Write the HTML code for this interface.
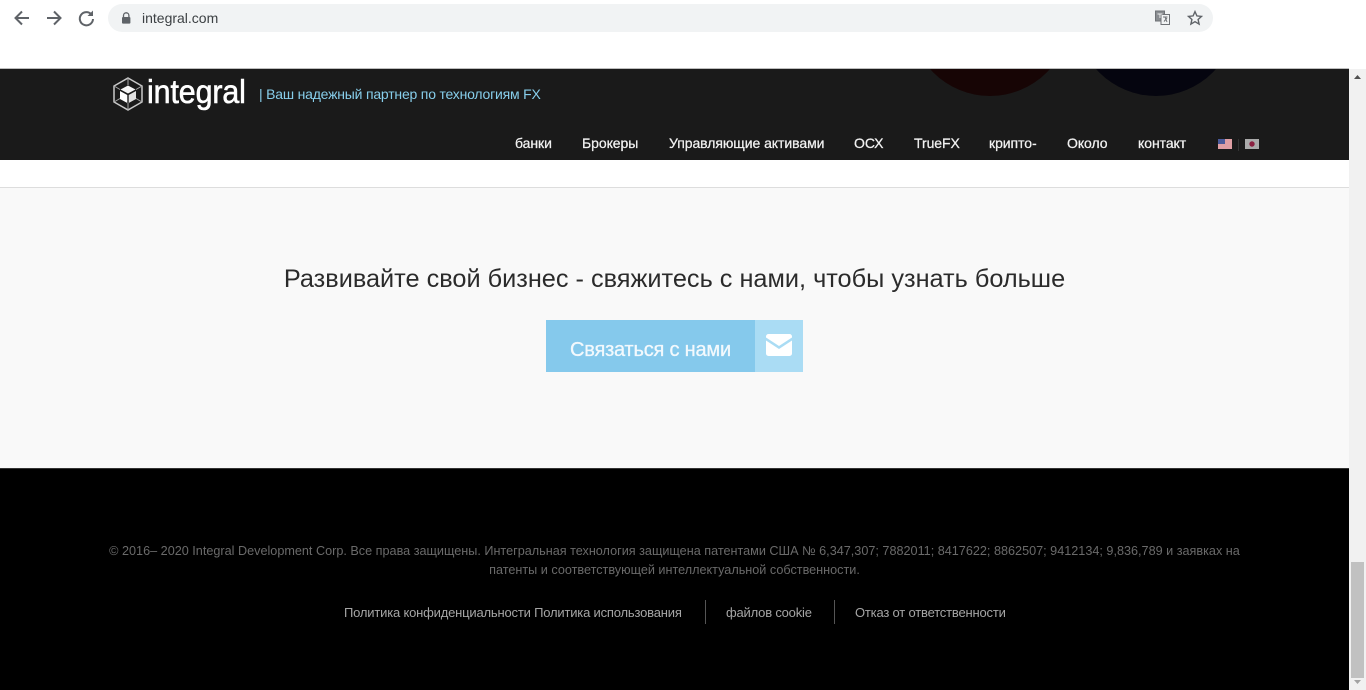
<!DOCTYPE html>
<html lang="ru"><head><meta charset="utf-8"><title>integral.com</title>
<style>
html,body{margin:0;padding:0;width:1366px;height:690px;overflow:hidden;background:#fff;font-family:"Liberation Sans",sans-serif}
.a{position:absolute;white-space:nowrap}
.n{top:135px;font-size:14px;line-height:16px;color:#f2f2f2;letter-spacing:-.06px;-webkit-text-stroke:.25px #f2f2f2}
.f{font-size:12.65px;line-height:15px;color:#6a6a6a;text-align:center;left:0;width:1349px}
.l{top:605px;font-size:13px;line-height:16px;color:#a5a5a5;letter-spacing:-.19px}
</style></head><body>
<!-- browser bar -->
<svg class="a" style="left:0;top:0" width="110" height="36" fill="none" stroke="#5f6368" stroke-width="2">
<path d="M29 18H16M22 11.5L15.5 18L22 24.5"/>
<path d="M47 18H60M54 11.5L60.5 18L54 24.5"/>
<path d="M91.5 14.5A6.6 6.6 0 1 0 93 19"/><path d="M93 10.5V16H87.5z" fill="#5f6368" stroke="none"/>
</svg>
<div class="a" style="left:108px;top:4px;width:1105px;height:28px;border-radius:14px;background:#f1f3f4"></div>
<svg class="a" style="left:120px;top:11px" width="12" height="14"><path d="M3.5 6V4.5a2.7 2.7 0 0 1 5.4 0V6" fill="none" stroke="#5f6368" stroke-width="1.3"/><rect x="2" y="6" width="8.4" height="6.6" rx="1" fill="#5f6368"/></svg>
<div class="a" style="left:142px;top:10px;font-size:14px;line-height:17px;color:#3c4043">integral.com</div>
<svg class="a" style="left:1154px;top:9px" width="18" height="18"><rect x="1.5" y="2" width="9" height="10" fill="#8a8d91" stroke="#6f7276"/><rect x="7" y="5.5" width="8.5" height="10" fill="#f1f3f4" stroke="#6f7276"/><path d="M9 8h4.5M11 8l2 5M13 9l-3 3.5" stroke="#6f7276" fill="none"/><path d="M3.5 5h5M6 5v4" stroke="#eee" fill="none"/></svg>
<svg class="a" style="left:1186px;top:9px" width="18" height="18"><path d="M9 2.6l1.9 4.3 4.6.5-3.4 3.1 1 4.6L9 12.7l-4.1 2.4 1-4.6-3.4-3.1 4.6-.5z" fill="none" stroke="#5f6368" stroke-width="1.4"/></svg>

<!-- scrollbar -->
<div class="a" style="left:1349px;top:69px;width:17px;height:621px;background:#f1f1f1"></div>
<svg class="a" style="left:1349px;top:69px" width="17" height="17"><path d="M5 10l3.5-4 3.500 4z" fill="#505050"/></svg>
<div class="a" style="left:1351px;top:562px;width:13px;height:116px;background:#c1c1c1"></div>
<svg class="a" style="left:1349px;top:673px" width="17" height="17"><path d="M5 7l3.500 4 3.500-4z" fill="#a3a3a3"/></svg>

<!-- header -->
<div class="a" style="left:0;top:68px;width:1349px;height:1px;background:#bdbdbd"></div>
<div class="a" style="left:0;top:69px;width:1349px;height:91px;background:#1a1a1a;overflow:hidden">
  <div class="a" style="left:910px;top:-133px;width:160px;height:160px;border-radius:50%;background:#170505"></div>
  <div class="a" style="left:1076px;top:-133px;width:160px;height:160px;border-radius:50%;background:#05050f"></div>
</div>
<svg class="a" style="left:112px;top:76px" width="32" height="36" fill="none">
<path d="M16 2L30 10V26L16 34L2 26V10Z" stroke="#c9c9c9" stroke-width="1.5"/>
<path d="M16 2V9M30 10L24 13.500M30 26L24 22.500M16 34V27M2 26L8 22.500M2 10L8 13.500" stroke="#a8a8a8"/>
<path d="M16 9.500L23.500 13.500L16 17.500L8.500 13.500Z" fill="#f4f4f4"/>
<path d="M8 15L15.300 19V27L8 23Z" fill="#fff"/><path d="M24 15L16.700 19V27L24 23Z" fill="#e2e2e2"/>
</svg>
<div class="a" style="left:147px;top:72px;font-size:33px;line-height:40px;color:#fff;letter-spacing:-.1px;-webkit-text-stroke:.6px #fff;transform-origin:0 0;transform:scaleX(.92)">integral</div>
<div class="a" style="left:259px;top:86px;font-size:14px;line-height:16px;color:#87ceeb;letter-spacing:-.2px">| Ваш надежный партнер по технологиям FX</div>

<div class="a n" style="left:515px">банки</div>
<div class="a n" style="left:582px">Брокеры</div>
<div class="a n" style="left:669px">Управляющие активами</div>
<div class="a n" style="left:854px">ОСХ</div>
<div class="a n" style="left:914px">TrueFX</div>
<div class="a n" style="left:989px">крипто-</div>
<div class="a n" style="left:1067px">Около</div>
<div class="a n" style="left:1138px">контакт</div>
<svg class="a" style="left:1218px;top:139px" width="42" height="12">
<rect width="14" height="10" y="0" fill="#eee"/><path d="M0 1h14M0 3h14M0 5h14M0 7h14M0 9h14" stroke="#d0505a" stroke-width="1"/><rect width="7" height="5" fill="#4a5a9a"/>
<rect x="20" y="-3" width="1" height="15" fill="#333"/>
<rect x="27" y="0" width="14" height="10" fill="#aaa"/><circle cx="34" cy="5" r="2.700" fill="#8a2040"/>
</svg>

<!-- white + grey section -->
<div class="a" style="left:0;top:187px;width:1349px;height:1px;background:#ddd"></div>
<div class="a" style="left:0;top:188px;width:1349px;height:280px;background:#f9f9f9"></div>
<div class="a" style="left:0;top:279px;width:1349px;text-align:center;font-size:25.3px;line-height:0;color:#2b2b2b">Развивайте свой бизнес - свяжитесь с нами, чтобы узнать больше</div>
<div class="a" style="left:546px;top:320px;width:209px;height:52px;background:#85c9ec"></div>
<div class="a" style="left:755px;top:320px;width:48px;height:52px;background:#aadcf4"></div>
<div class="a" style="left:570px;top:338px;font-size:20px;line-height:24px;color:#f3f9fd;letter-spacing:-.2px;-webkit-text-stroke:.3px #f3f9fd">Связаться с нами</div>
<svg class="a" style="left:766px;top:334px" width="26" height="22"><path d="M2.500 0H23.500A2.500 2.500 0 0 1 26 2.500V3.500L13 12L0 3.500V2.500A2.500 2.500 0 0 1 2.500 0Z" fill="#fff"/><path d="M0 6.500L13 15L26 6.500V19.500A2.500 2.500 0 0 1 23.500 22H2.500A2.500 2.500 0 0 1 0 19.500Z" fill="#fff"/></svg>

<!-- footer -->
<div class="a" style="left:0;top:468px;width:1349px;height:222px;background:#000"></div>
<div class="a" style="left:0;top:468px;width:1349px;height:1px;background:#333"></div>
<div class="a f" style="top:544px">© 2016– 2020 Integral Development Corp. Все права защищены. Интегральная технология защищена патентами США № 6,347,307; 7882011; 8417622; 8862507; 9412134; 9,836,789 и заявках на</div>
<div class="a f" style="top:563px">патенты и соответствующей интеллектуальной собственности.</div>
<div class="a l" style="left:344px">Политика конфиденциальности Политика использования</div>
<div class="a" style="left:705px;top:600px;width:1px;height:24px;background:#555"></div>
<div class="a l" style="left:726px">файлов cookie</div>
<div class="a" style="left:834px;top:600px;width:1px;height:24px;background:#555"></div>
<div class="a l" style="left:855px">Отказ от ответственности</div>
</body></html>
